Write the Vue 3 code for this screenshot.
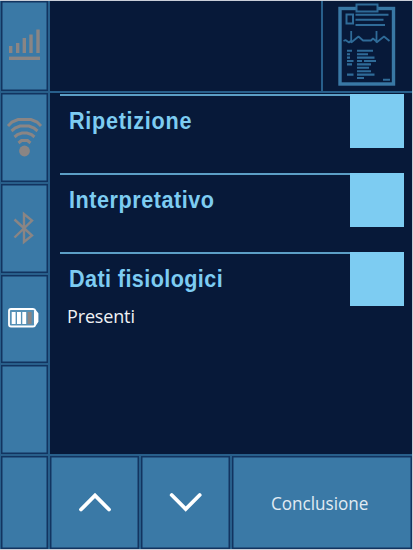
<script setup>
const rows = [
  { title: 'Ripetizione', cls: 'r1' },
  { title: 'Interpretativo', cls: 'r2' },
  { title: 'Dati fisiologici', cls: 'r3', note: 'Presenti' },
]
const bars = [[9, 46, 7], [16, 43, 10], [22.6, 38, 15], [29.3, 34.5, 18.5], [36.3, 29.5, 23.5]]
</script>

<template>
  <div class="screen">
    <aside class="side">
      <div class="cell">
        <svg width="47" height="90" viewBox="1 1 47 90">
          <g fill="#8a8584">
            <rect v-for="b in bars" :key="b[0]" :x="b[0]" :y="b[1]" width="3.4" :height="b[2]" />
            <rect x="9" y="56.6" width="31" height="3.4" />
          </g>
        </svg>
      </div>
      <div class="cell">
        <svg width="47" height="89" viewBox="1 93 47 89">
          <g fill="none" stroke="#8a8584" stroke-width="3">
            <path d="M8 126l4-4 6-2.5h13l6 2.5 4 4" />
            <path d="M11.5 131l3.5-3 5-2h9l5 2 3.5 3" />
            <path d="M14.5 137l3-2.5 4.5-1.500h5l4.500 1.500 3 2.500" />
            <path d="M18.500 143l3-2.500h6l3 2.500" />
          </g>
          <circle cx="24.500" cy="151" r="5.400" fill="#8a8584" />
        </svg>
      </div>
      <div class="cell">
        <svg width="47" height="89" viewBox="1 184 47 89">
          <path d="M14.500 219.500L32 235.500L24 242V214L32 220.500L14.500 237.500" fill="none" stroke="#8a8584" stroke-width="2.400" />
        </svg>
      </div>
      <div class="cell">
        <svg width="47" height="88" viewBox="1 275 47 88">
          <path d="M11 309h22q2 0 2.500 2l2 2.500v8l-2 3q-.5 2-2.500 2h-22q-2 0-2-2v-13.500q0-2 2-2z" fill="#5590b6" stroke="#fff" stroke-width="1.800" />
          <path d="M34 310l3.500 4v7.500l-3.500 4z" fill="#fff" />
          <path d="M11.700 312h3.900v12h-3.900zM17 312h3.900v12H17zM22.300 312h3.900v12h-3.900z" fill="#fff" />
          <path d="M27.600 312h4v12h-4z" fill="#8a8584" />
        </svg>
      </div>
      <div class="cell"></div>
      <div class="cell"></div>
    </aside>

    <main class="body">
      <header class="head">
        <div class="name"></div>
        <div class="report">
          <svg width="89" height="90" viewBox="323 1 89 90">
            <g fill="none" stroke="#2f6b98" stroke-linejoin="bevel">
              <rect x="340" y="8.500" width="53.500" height="75.500" stroke="#3978a5" stroke-width="3.400" stroke-linejoin="miter" />
              <rect x="356.500" y="4.500" width="21" height="7" stroke-width="2" stroke-linejoin="miter" fill="#071939" />
              <rect x="346.500" y="14.500" width="6.500" height="9" stroke-width="2" stroke-linejoin="miter" />
              <path d="M355.500 14.700h33M355.500 19.700h28M355.500 25h29.500" stroke-width="2" />
              <path d="M343.500 41l2-1 3.500 2.500 2.200-2V31v11.500l7.300-6 4.500 4h8l2-2 3.500 3V31v11.500l7.500-6 5.500 4.500" stroke-width="1.800" />
              <path d="M347 50.800h5M347 54.200h3M347 57.600h3M347 61h6.500M347 64.400h5M347 74.600h6.500M357 50.800h16M357 54.200h11M357 57.600h17.500M357 61h5M364 61h12M357 64.400h14M357 67.800h12M357 71.200h14M357 74.600h17.500M357 78h7M383 79.700h7" stroke-width="2.100" />
            </g>
          </svg>
        </div>
      </header>

      <section class="list">
        <div v-for="r in rows" :key="r.title" class="item">
          <div class="label">
            <h2 :class="r.cls">{{ r.title }}</h2>
            <p v-if="r.note">{{ r.note }}</p>
          </div>
          <div class="box"></div>
        </div>
      </section>

      <footer class="foot">
        <button class="cell">
          <svg width="89" height="93" viewBox="50 456 89 93">
            <path d="M81 509.500l14-14 14 14" class="arrow" />
          </svg>
        </button>
        <button class="cell">
          <svg width="89" height="93" viewBox="141 456 89 93">
            <path d="M171.700 495l14 14 14-14" class="arrow" />
          </svg>
        </button>
        <button class="cell"><span class="done">Conclusione</span></button>
      </footer>
    </main>
  </div>
</template>

<style>
body {
  margin: 0;
  background: #c9ced8;
}
</style>

<style scoped>
.screen {
  box-sizing: border-box;
  width: 412px;
  height: 549px;
  padding: 1px 0 0 1px;
  display: grid;
  grid-template-columns: 47px 362px;
  gap: 2px;
  background: linear-gradient(#c9ced8 1px, #285f8b 1px);
}
.side {
  display: grid;
  grid-template-rows: 90px 89px 89px 88px 89px 93px;
  gap: 2px;
}
.cell {
  box-sizing: border-box;
  margin: 0;
  padding: 0;
  border: 0;
  background: #3a79a6;
  box-shadow: inset 0 0 0 1.500px #123460;
  display: flex;
  align-items: center;
  justify-content: center;
  overflow: hidden;
}
svg {
  display: block;
  flex: none;
}
.body {
  display: grid;
  grid-template-rows: 90px 361px 93px;
  gap: 2px;
}
.head {
  display: grid;
  grid-template-columns: 271px 89px;
  gap: 2px;
}
.name,
.report {
  background: #071939;
}
.list {
  background: #071939;
  padding: 1px 8px 0 10px;
}
.item {
  height: 79px;
  display: flex;
}
.label {
  width: 290px;
  box-sizing: border-box;
  border-top: 2px solid #5c9fc6;
  padding-left: 9px;
}
.box {
  width: 54px;
  height: 54px;
  background: #7dccf2;
}
h2 {
  margin: 11px 0 0;
  font: bold 24px/28px "Liberation Sans", Arial, sans-serif;
  color: #7dccf2;
  white-space: nowrap;
  transform: scaleX(0.9);
  transform-origin: 0 50%;
}
.r1 {
  letter-spacing: 0.8px;
}
.r2 {
  letter-spacing: 0.6px;
}
.r3 {
  letter-spacing: 0.45px;
}
p {
  margin: 10px 0 0 -2px;
  font: 18px/26px "Open Sans", "Noto Sans", sans-serif;
  letter-spacing: -0.15px;
  color: #f0f2f5;
}
.foot {
  display: grid;
  grid-template-columns: 89px 89px 180px;
  gap: 2px;
}
.arrow {
  fill: none;
  stroke: #fff;
  stroke-width: 3.800;
  stroke-linecap: round;
  stroke-linejoin: miter;
}
.done {
  font: 18.500px/26px "Open Sans", "Noto Sans", sans-serif;
  color: #e1ebf3;
  transform: translateX(-2px) scaleX(0.925);
}
</style>
